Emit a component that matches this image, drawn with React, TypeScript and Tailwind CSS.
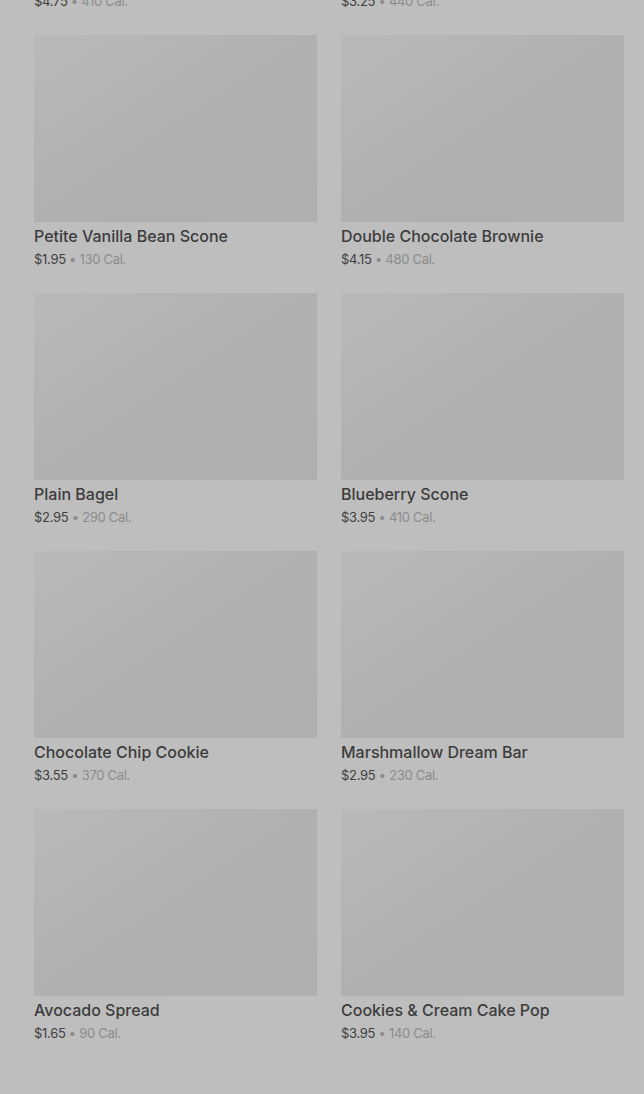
import React from "react";

const items = [
  { name: "Top Item A", price: "$4.75", cal: "410 Cal." },
  { name: "Top Item B", price: "$3.25", cal: "440 Cal." },
  { name: "Petite Vanilla Bean Scone", price: "$1.95", cal: "130 Cal." },
  { name: "Double Chocolate Brownie", price: "$4.15", cal: "480 Cal." },
  { name: "Plain Bagel", price: "$2.95", cal: "290 Cal." },
  { name: "Blueberry Scone", price: "$3.95", cal: "410 Cal." },
  { name: "Chocolate Chip Cookie", price: "$3.55", cal: "370 Cal." },
  { name: "Marshmallow Dream Bar", price: "$2.95", cal: "230 Cal." },
  { name: "Avocado Spread", price: "$1.65", cal: "90 Cal." },
  { name: "Cookies & Cream Cake Pop", price: "$3.95", cal: "140 Cal." },
];

export default function App() {
  return (
    <div
      className="w-[644px] h-[1094px] overflow-hidden bg-[#bebebe]"
      style={{ fontFamily: "Inter, 'Noto Sans', sans-serif" }}
    >
      <div className="mt-[-223px] pl-[34px] pr-[20px] grid grid-cols-2 gap-x-[24px] gap-y-[25px]">
        {items.map((it, i) => (
          <div key={i} className="flex flex-col">
            <div className="h-[187px] w-full bg-gradient-to-br from-[#b9b9b9] via-[#b0b0b0] to-[#afafaf]" />
            <div className="mt-1 text-[16px] leading-5 font-medium text-[#3c3c3c]">
              {it.name}
            </div>
            <div className="mt-1 text-[13px] leading-[18px] tracking-[-0.3px] text-[#404040]">
              {it.price}
              <span className="text-[#8c8c8c]"> • {it.cal}</span>
            </div>
          </div>
        ))}
      </div>
    </div>
  );
}
